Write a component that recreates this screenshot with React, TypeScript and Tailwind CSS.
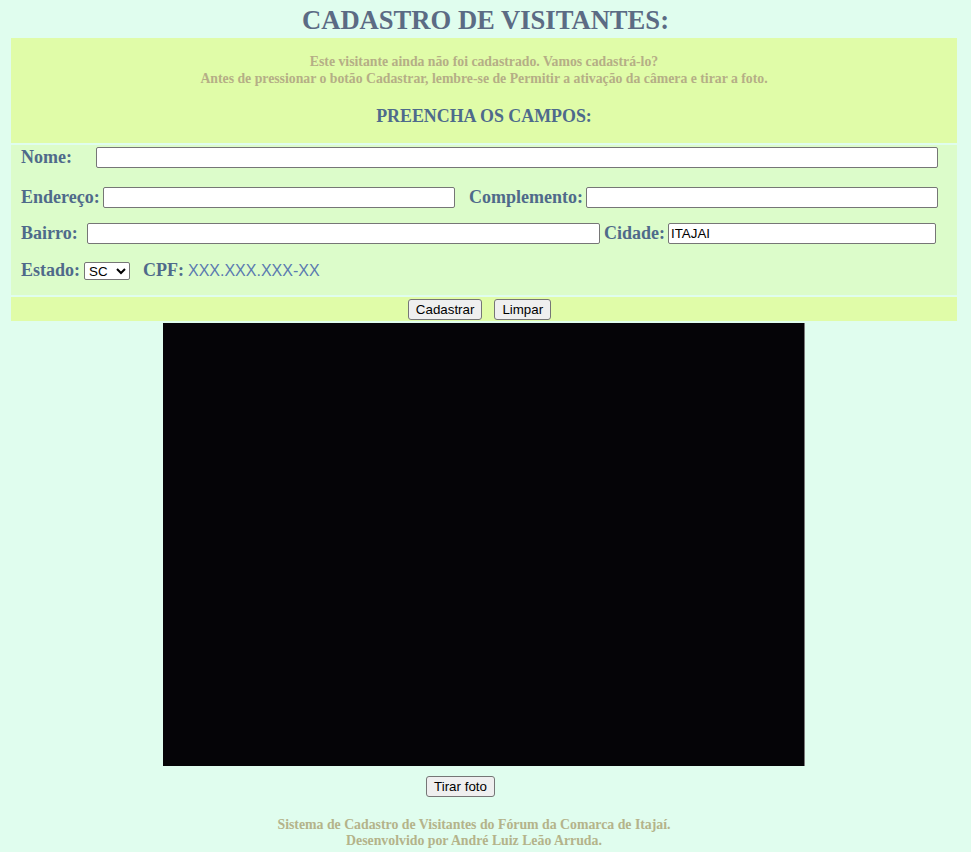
import React from "react";

const inputCls =
  "h-[21px] bg-white border border-[#767676] rounded-[2px] px-[2px] text-[13.33px] text-black font-['Liberation_Sans',Arial,sans-serif] outline-none";
const btnCls =
  "h-[21px] bg-[#efefef] border border-[#767676] rounded-[3px] px-[7px] text-[13.33px] leading-[19px] text-black font-['Liberation_Sans',Arial,sans-serif]";
const labelCls = "whitespace-nowrap text-[18px] leading-[21px] font-bold text-[#4f6a8a]";

export default function App() {
  return (
    <div className="min-h-[852px] w-[971px] bg-[#e0fdee] font-['Liberation_Serif','Times_New_Roman',serif]">
      <h1 className="h-[38px] pt-[5px] text-center text-[26.6px] font-bold leading-[30px] text-[#5b6b84]">
        CADASTRO DE VISITANTES:
      </h1>

      {/* aviso */}
      <div className="ml-[11px] h-[105px] w-[946px] bg-[#e0fca8] pt-[15px] text-center">
        <p className="text-[13.75px] font-bold leading-[17px] text-[#b5ae86]">
          Este visitante ainda não foi cadastrado. Vamos cadastrá-lo?
          <br />
          Antes de pressionar o botão Cadastrar, lembre-se de Permitir a ativação da câmera e tirar a foto.
        </p>
        <p className="mt-[18px] text-[17.9px] font-bold leading-[22px] text-[#4e6a8c]">PREENCHA OS CAMPOS:</p>
      </div>

      {/* campos */}
      <div className="ml-[11px] mt-[2px] h-[150px] w-[946px] bg-[#dcfcca] pl-[10px] pt-[2px]">
        <div className="flex items-center">
          <span className={`${labelCls} w-[75px]`}>Nome:</span>
          <input className={`${inputCls} w-[842px]`} />
        </div>
        <div className="mt-[19px] flex items-center">
          <span className={`${labelCls} w-[82px]`}>Endereço:</span>
          <input className={`${inputCls} w-[352px]`} />
          <span className={`${labelCls} ml-[14px] w-[117px]`}>Complemento:</span>
          <input className={`${inputCls} w-[352px]`} />
        </div>
        <div className="mt-[15px] flex items-center">
          <span className={`${labelCls} w-[66px]`}>Bairro:</span>
          <input className={`${inputCls} w-[513px]`} />
          <span className={`${labelCls} ml-[4px] w-[64px]`}>Cidade:</span>
          <input className={`${inputCls} w-[268px]`} defaultValue="ITAJAI" />
        </div>
        <div className="mt-[16px] flex items-center">
          <span className={`${labelCls} w-[63px]`}>Estado:</span>
          <select className="h-[18px] w-[46px] rounded-[2px] border border-[#767676] bg-white text-[13.33px] text-black font-['Liberation_Sans',Arial,sans-serif]">
            <option>SC</option>
          </select>
          <span className={`${labelCls} ml-[13px] mr-[4px]`}>CPF:</span>
          <span className="text-[16px] leading-[21px] text-[#5a7ab0] font-['Liberation_Sans',Arial,sans-serif]">XXX.XXX.XXX-XX</span>
        </div>
      </div>

      {/* botoes */}
      <div className="ml-[11px] mt-[2px] flex h-[24px] w-[946px] items-center justify-center gap-[12px] bg-[#e0fca8] pr-[9px]">
        <button className={btnCls}>Cadastrar</button>
        <button className={btnCls}>Limpar</button>
      </div>

      {/* camera */}
      <div className="ml-[163px] mt-[2px] h-[443px] w-[642px] border-r border-[#7a7a7a] bg-[#050407]" />

      <div className="mt-[10px] flex w-[921px] justify-center">
        <button className={btnCls}>Tirar foto</button>
      </div>

      <p className="mt-[20px] w-[948px] text-center text-[13.8px] font-bold leading-[16px] text-[#b4b38a]">
        Sistema de Cadastro de Visitantes do Fórum da Comarca de Itajaí.
        <br />
        Desenvolvido por André Luiz Leão Arruda.
      </p>
    </div>
  );
}
